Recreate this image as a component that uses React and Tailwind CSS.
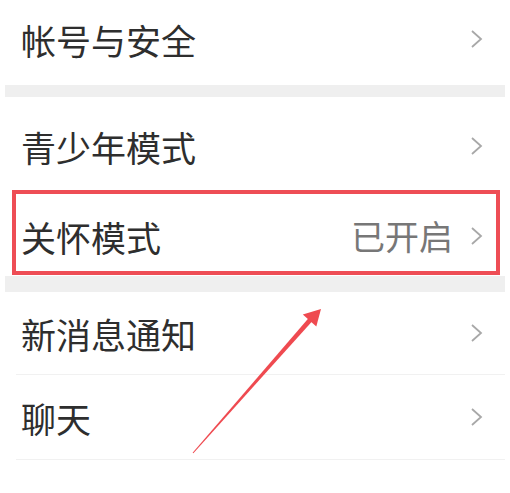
function Chevron() {
  return (
    <svg width="13" height="20" viewBox="0 0 13 20" className="shrink-0">
      <polyline points="2,2 11,10 2,18" fill="none" stroke="#a8a8a8" strokeWidth="1.8" strokeLinejoin="miter" />
    </svg>
  );
}

function Row({ label, value, className = '', children }) {
  return (
    <div className={`relative flex items-center justify-between pl-4 pr-[22px] ${className}`}>
      <span className="text-[35px] leading-none text-[#2e2e2e]">{label}</span>
      <div className="flex items-center gap-[17px]">
        {value && <span className="text-[34px] leading-none text-[#777777]">{value}</span>}
        <Chevron />
      </div>
      {children}
    </div>
  );
}

export default function App() {
  return (
    <div className="relative w-[510px] h-[493px] overflow-hidden bg-white px-[5px] font-['Noto_Sans_CJK_SC','Noto_Sans',sans-serif]">
      <Row label="帐号与安全" className="h-[78px] mb-[7px]" />
      <div className="h-[12px] bg-[#efefef]" />

      <Row label="青少年模式" className="h-[95px] pt-[3px]" />

      <Row label="关怀模式" value="已开启" className="h-[84px] pt-[4px]">
        <div className="absolute -top-[2px] left-[7px] right-[5px] bottom-[1px] border-[4px] border-[#ee4d55]" />
      </Row>
      <div className="h-[16px] bg-[#efefef]" />

      <div className="border-b border-[#f1f1f1] ml-[11px]">
        <Row label="新消息通知" className="h-[82px] -ml-[11px]" />
      </div>
      <div className="border-b border-[#f1f1f1] ml-[11px]">
        <Row label="聊天" className="h-[84px] -ml-[11px]" />
      </div>

      <svg className="pointer-events-none absolute inset-0" width="510" height="493" viewBox="0 0 510 493">
        <polygon points="192.6,452.7 193.4,453.3 312.9,320.6 309.1,317.4" fill="#ef4a50" />
        <polygon points="321,309 302.8,314.6 316.3,326.4" fill="#ef4a50" />
      </svg>
    </div>
  );
}
